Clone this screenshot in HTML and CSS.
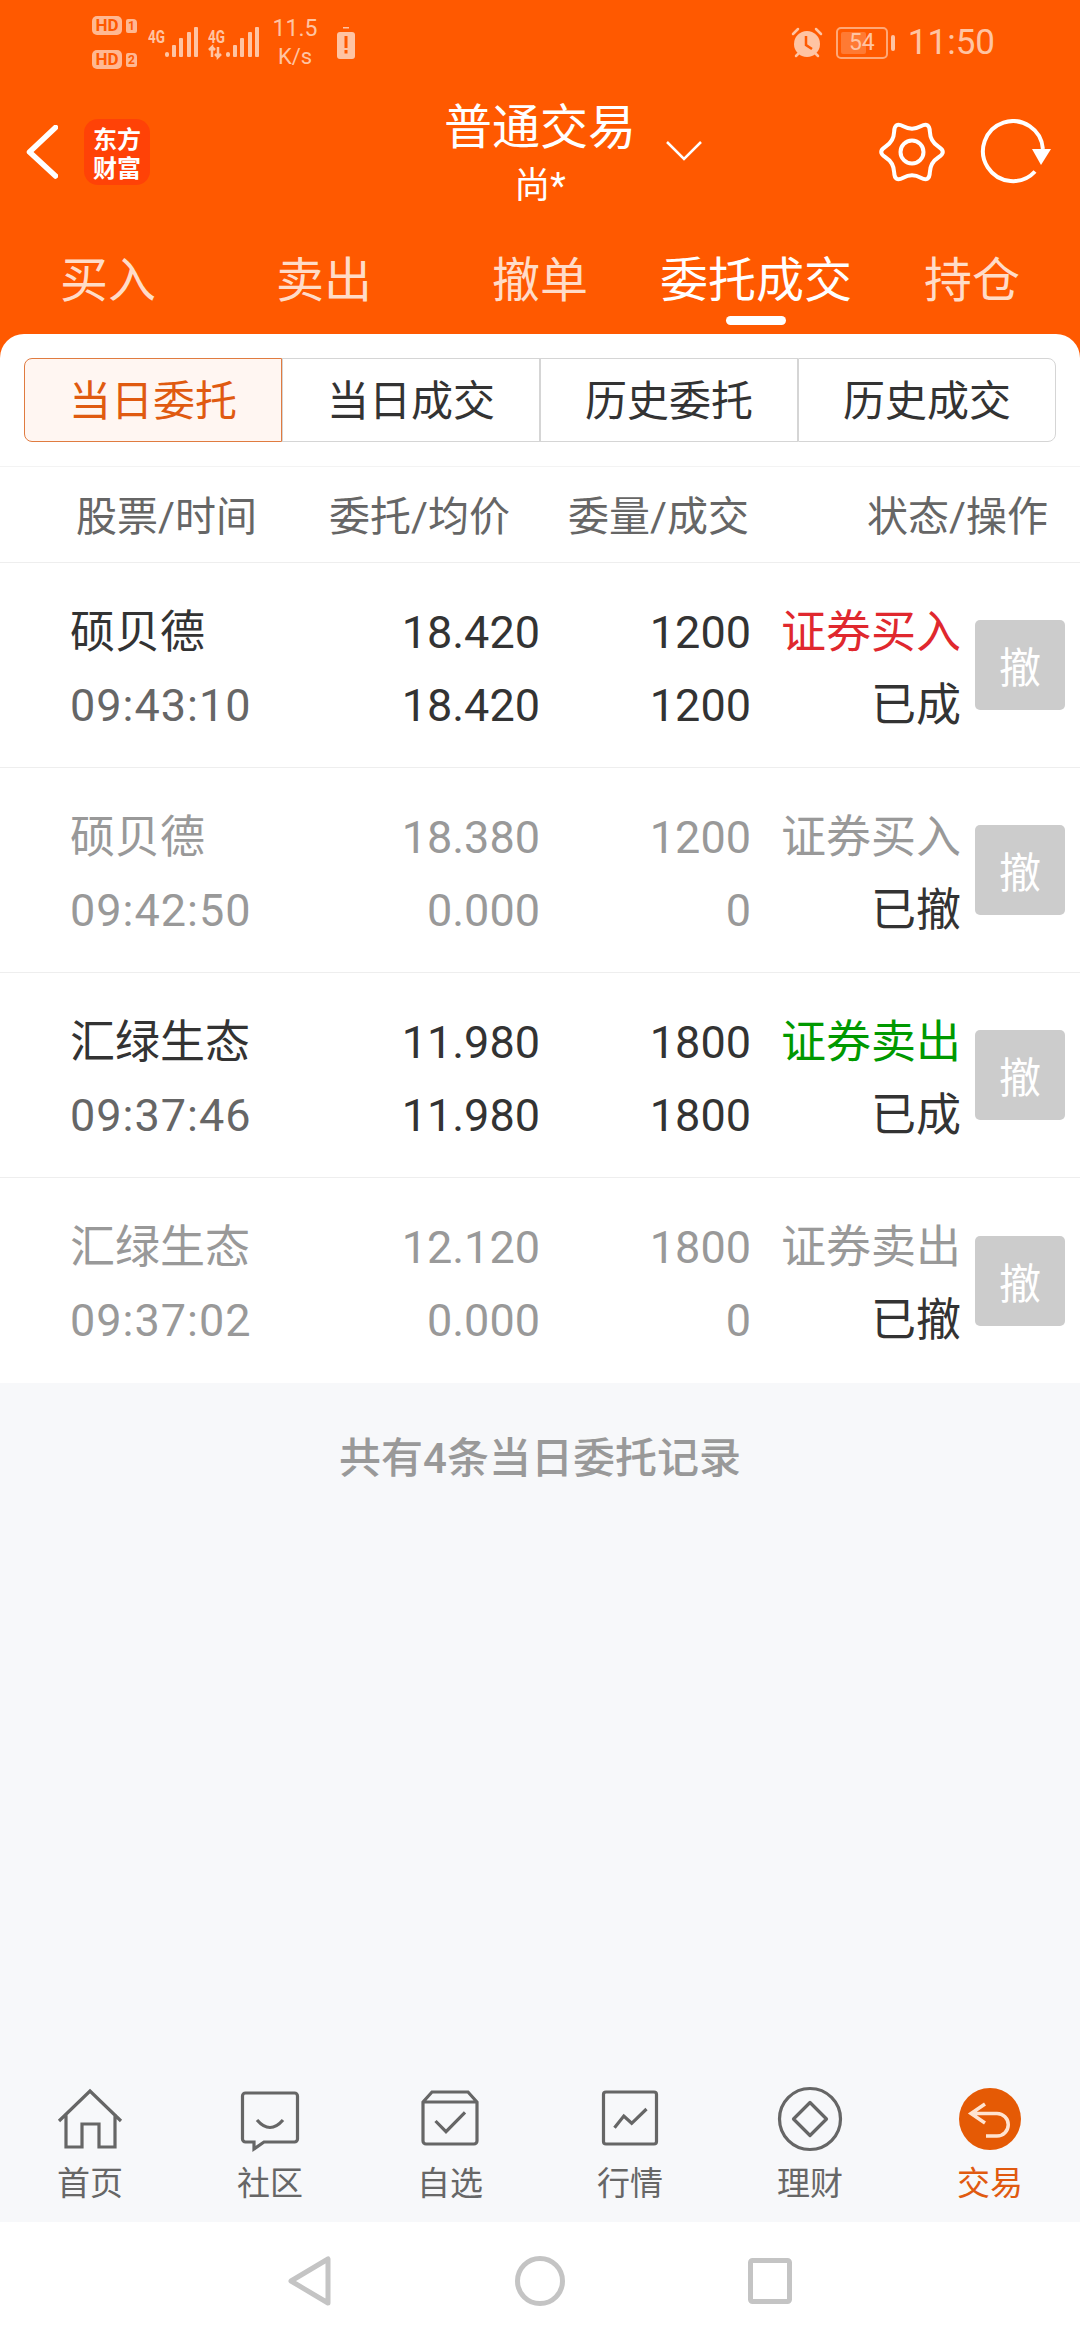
FILE: index.html
```html
<!DOCTYPE html>
<html lang="zh-CN">
<head>
    <meta charset="UTF-8">
    <meta name="viewport" content="width=device-width, initial-scale=1.0">
    <title>委托成交</title>
    <link rel="stylesheet" href="styles.css">
</head>
<body>
<div class="page">

    <!-- Orange top area -->
    <header class="top">
        <div class="status-bar">
            <div class="sims">
                <div class="sim"><span class="hd">HD</span><span class="sim-no">1</span></div>
                <div class="sim"><span class="hd">HD</span><span class="sim-no">2</span></div>
            </div>
            <svg class="net" width="50" height="34" viewBox="0 0 50 34">
                <text x="0" y="17" class="net-text" textLength="17" lengthAdjust="spacingAndGlyphs">4G</text>
                <rect x="17" y="26" width="4" height="5" rx="2"/>
                <rect x="24" y="19" width="4" height="12" rx="1"/>
                <rect x="31" y="12" width="4" height="19" rx="1"/>
                <rect x="39" y="6" width="4" height="25" rx="1"/>
                <rect x="46" y="1" width="4" height="30" rx="1"/>
            </svg>
            <svg class="net net-two" width="51" height="34" viewBox="0 0 51 34">
                <text x="0" y="17" class="net-text" textLength="17" lengthAdjust="spacingAndGlyphs">4G</text>
                <path d="M4 31V21L1 24M4 21L7 24M10 21V31L13 28M10 31L7 28" class="net-arrows"/>
                <rect x="18" y="26" width="4" height="5" rx="2"/>
                <rect x="25" y="19" width="4" height="12" rx="1"/>
                <rect x="32" y="12" width="4" height="19" rx="1"/>
                <rect x="40" y="6" width="4" height="25" rx="1"/>
                <rect x="47" y="1" width="4" height="30" rx="1"/>
            </svg>
            <div class="speed"><span>11.5</span><span class="speed-unit">K/s</span></div>
            <svg class="warn-battery" width="18" height="32" viewBox="0 0 18 32">
                <rect x="6" y="0" width="6" height="1.5"/>
                <rect x="0" y="5" width="18" height="27" rx="3"/>
                <rect x="7.5" y="9" width="3" height="12" fill="#ff5900"/>
                <rect x="7.5" y="23" width="3" height="3.5" fill="#ff5900"/>
            </svg>
            <div class="status-right">
                <svg width="32" height="32" viewBox="0 0 32 32">
                    <circle cx="16" cy="17" r="13" fill="#ffc4a3"/>
                    <path d="M15 9V18L21 22" fill="none" stroke="#ff5900" stroke-width="2.5"/>
                    <path d="M2 7L7 2M30 7L25 2M5 29L7 27M27 29L25 27" fill="none" stroke="#ffc4a3" stroke-width="2.5" stroke-linecap="round"/>
                </svg>
                <div class="battery">
                    <div class="battery-box"><span class="battery-fill"></span><span class="battery-level">54</span></div>
                    <span class="battery-nub"></span>
                </div>
                <span class="clock">11:50</span>
            </div>
        </div>

        <div class="head-row">
            <div class="head-left">
                <svg width="32" height="54" viewBox="0 0 32 54">
                    <path d="M29.5 2.5L3.5 27L29.5 51" fill="none" stroke="#fff" stroke-width="5.5" stroke-linecap="round" stroke-linejoin="round"/>
                </svg>
                <div class="logo">东方<br>财富</div>
            </div>
            <div class="head-title">
                <div class="title">普通交易</div>
                <div class="subtitle">尚*</div>
                <svg class="title-arrow" width="36" height="20" viewBox="0 0 36 20">
                    <path d="M1 1L18 18L35 1" fill="none" stroke="#fff" stroke-width="2.5"/>
                </svg>
            </div>
            <div class="head-right">
                <svg width="66" height="66" viewBox="0 0 66 66">
                    <path d="M24.25 7.35Q33 12 41.75 7.35Q50.5 2.7 50.85 12.6Q51.2 22.5 59.6 27.75Q68 33 59.6 38.25Q51.2 43.5 50.85 53.4Q50.5 63.3 41.75 58.65Q33 54 24.25 58.65Q15.5 63.3 15.15 53.4Q14.8 43.5 6.4 38.25Q-2 33 6.4 27.75Q14.8 22.5 15.15 12.6Q15.5 2.7 24.25 7.35Z" fill="none" stroke="#fff" stroke-width="4"/>
                    <circle cx="33" cy="33" r="11.5" fill="none" stroke="#fff" stroke-width="4"/>
                </svg>
                <svg width="76" height="66" viewBox="0 0 76 66">
                    <path d="M59 52.5A30 30 0 1 1 66.9 30" fill="none" stroke="#fff" stroke-width="4"/>
                    <path d="M56 30H75L65 46Z" fill="#fff"/>
                </svg>
            </div>
        </div>

        <nav class="trade-tabs">
            <div class="trade-tab">买入</div>
            <div class="trade-tab">卖出</div>
            <div class="trade-tab">撤单</div>
            <div class="trade-tab active">委托成交</div>
            <div class="trade-tab">持仓</div>
        </nav>
    </header>

    <!-- Orders card -->
    <section class="card">
        <div class="segments">
            <div class="segment active">当日委托</div>
            <div class="segment">当日成交</div>
            <div class="segment">历史委托</div>
            <div class="segment">历史成交</div>
        </div>

        <div class="table-head">
            <div>股票/时间</div>
            <div>委托/均价</div>
            <div>委量/成交</div>
            <div>状态/操作</div>
        </div>

        <div class="order">
            <div class="cell-name"><div>硕贝德</div><div class="time">09:43:10</div></div>
            <div class="cell-num"><div>18.420</div><div>18.420</div></div>
            <div class="cell-num"><div>1200</div><div>1200</div></div>
            <div class="cell-num"><div class="buy">证券买入</div><div>已成</div></div>
            <div class="cancel">撤</div>
        </div>
        <div class="order done">
            <div class="cell-name"><div>硕贝德</div><div class="time">09:42:50</div></div>
            <div class="cell-num"><div>18.380</div><div>0.000</div></div>
            <div class="cell-num"><div>1200</div><div>0</div></div>
            <div class="cell-num"><div>证券买入</div><div class="state">已撤</div></div>
            <div class="cancel">撤</div>
        </div>
        <div class="order">
            <div class="cell-name"><div>汇绿生态</div><div class="time">09:37:46</div></div>
            <div class="cell-num"><div>11.980</div><div>11.980</div></div>
            <div class="cell-num"><div>1800</div><div>1800</div></div>
            <div class="cell-num"><div class="sell">证券卖出</div><div>已成</div></div>
            <div class="cancel">撤</div>
        </div>
        <div class="order done last">
            <div class="cell-name"><div>汇绿生态</div><div class="time">09:37:02</div></div>
            <div class="cell-num"><div>12.120</div><div>0.000</div></div>
            <div class="cell-num"><div>1800</div><div>0</div></div>
            <div class="cell-num"><div>证券卖出</div><div class="state">已撤</div></div>
            <div class="cancel">撤</div>
        </div>
    </section>

    <div class="records">共有4条当日委托记录</div>

    <!-- Bottom navigation -->
    <nav class="bottom-nav">
        <div class="nav-item">
            <svg class="nav-icon" viewBox="0 0 64 64">
                <path d="M1 34L32 4L63 34M8 27V60H24V37H41V60H57V27"/>
            </svg>
            <span>首页</span>
        </div>
        <div class="nav-item">
            <svg class="nav-icon" viewBox="0 0 64 64">
                <path d="M7.5 6H56.5A3 3 0 0 1 59.5 9V52A3 3 0 0 1 56.5 55H26L16 62V55H7.5A3 3 0 0 1 4.5 52V9A3 3 0 0 1 7.5 6Z"/>
                <path d="M19 33Q32 48 45 33"/>
            </svg>
            <span>社区</span>
        </div>
        <div class="nav-item">
            <svg class="nav-icon" viewBox="0 0 64 64">
                <path d="M5 15L14 5H50L59 15V54A3 3 0 0 1 56 57H8A3 3 0 0 1 5 54ZM5 15H59"/>
                <path d="M17.5 34L28 44.7L47 25.3"/>
            </svg>
            <span>自选</span>
        </div>
        <div class="nav-item">
            <svg class="nav-icon" viewBox="0 0 64 64">
                <rect x="5.5" y="5" width="53" height="52" rx="2.5"/>
                <path d="M16.5 40.7L25.8 29L33.7 36.3L48.5 22"/>
            </svg>
            <span>行情</span>
        </div>
        <div class="nav-item">
            <svg class="nav-icon" viewBox="0 0 64 64">
                <circle cx="32" cy="32" r="30.5"/>
                <path d="M32 15.5L48.5 32L32 48.5L15.5 32Z" stroke-linejoin="round"/>
            </svg>
            <span>理财</span>
        </div>
        <div class="nav-item active">
            <svg class="nav-icon" viewBox="0 0 64 64">
                <circle cx="32" cy="32" r="31" class="trade-disc"/>
                <path d="M27 17L13 26.5L27 36M13 26.5H39A11 11 0 0 1 39 49H28" class="trade-arrow"/>
            </svg>
            <span>交易</span>
        </div>
    </nav>

    <!-- System buttons -->
    <div class="system-nav">
        <svg width="44" height="50" viewBox="0 0 44 50">
            <path d="M40 3V47L3 25Z" fill="none" stroke="#c4c4c4" stroke-width="5" stroke-linejoin="round"/>
        </svg>
        <svg width="50" height="50" viewBox="0 0 50 50">
            <circle cx="25" cy="25" r="22.5" fill="none" stroke="#c4c4c4" stroke-width="5"/>
        </svg>
        <svg width="44" height="46" viewBox="0 0 44 46">
            <rect x="2.5" y="2.5" width="39" height="41" rx="2" fill="none" stroke="#c4c4c4" stroke-width="5"/>
        </svg>
    </div>
</div>
</body>
</html>
```

FILE: styles.css
```css
/* General Styles */
body {
    margin: 0;
    font-family: Roboto, "Noto Sans CJK SC", sans-serif;
    color: #333;
}

.page {
    width: 1080px;
    height: 2340px;
    display: flex;
    flex-direction: column;
    background-color: #f7f8fa;
    overflow: hidden;
}

/* Top area */
.top {
    background-color: #ff5900;
    height: 358px;
    flex-shrink: 0;
}

.status-bar {
    height: 85px;
    display: flex;
    align-items: center;
    padding: 0 85px 0 92px;
    color: #ffc4a3;
}

.sims {
    width: 45px;
    display: flex;
    flex-direction: column;
    gap: 15px;
}

.sim {
    display: flex;
    align-items: center;
    gap: 4px;
}

.hd {
    width: 30px;
    height: 19px;
    line-height: 19px;
    border-radius: 5px;
    background-color: #ffb892;
    color: #ff5900;
    font-size: 17px;
    font-weight: 700;
    text-align: center;
}

.sim-no {
    width: 11px;
    height: 14px;
    line-height: 14px;
    border-radius: 2px 4px 2px 2px;
    background-color: #ffb892;
    color: #ff5900;
    font-size: 12px;
    font-weight: 700;
    text-align: center;
}

.net {
    margin-left: 11px;
    fill: #ffc4a3;
}

.net-two {
    margin-left: 10px;
}

.net-text {
    font-size: 18px;
    font-weight: 700;
}

.net-arrows {
    fill: none;
    stroke: #ffc4a3;
    stroke-width: 2.5;
}

.speed {
    width: 44px;
    margin-left: 14px;
    display: flex;
    flex-direction: column;
    align-items: center;
    font-size: 23px;
    line-height: 28px;
}

.speed-unit {
    font-size: 22px;
}

.warn-battery {
    margin-left: 20px;
    fill: #ffc4a3;
}

.status-right {
    margin-left: auto;
    display: flex;
    align-items: center;
}

.battery {
    margin-left: 13px;
    display: flex;
    align-items: center;
    gap: 3px;
}

.battery-box {
    position: relative;
    width: 52px;
    height: 32px;
    box-sizing: border-box;
    border: 2px solid #ffa877;
    border-radius: 5px;
    text-align: center;
}

.battery-fill {
    position: absolute;
    left: 3px;
    top: 3px;
    bottom: 3px;
    width: 25px;
    border-radius: 2px;
    background-color: #ff7a33;
}

.battery-level {
    position: relative;
    font-size: 23px;
    line-height: 28px;
    color: #ffc4a3;
}

.battery-nub {
    width: 4px;
    height: 16px;
    border-radius: 2px;
    background-color: #ffc4a3;
}

.clock {
    margin-left: 13px;
    font-size: 35px;
}

/* Title row */
.head-row {
    height: 134px;
    display: grid;
    grid-template-columns: 1fr auto 1fr;
    align-items: center;
}

.head-left {
    display: flex;
    align-items: center;
    gap: 26px;
    padding-left: 26px;
}

.logo {
    width: 66px;
    height: 66px;
    border-radius: 14px;
    background-color: #ff4207;
    color: #fff;
    font-family: "Noto Sans CJK SC", sans-serif;
    font-size: 24px;
    font-weight: 700;
    line-height: 29px;
    padding-top: 4px;
    box-sizing: border-box;
    text-align: center;
}

.head-title {
    position: relative;
    margin-top: 10px;
    color: #fff;
    text-align: center;
}

.title {
    font-size: 48px;
    line-height: 58px;
}

.subtitle {
    font-size: 36px;
    line-height: 58px;
}

.title-arrow {
    position: absolute;
    left: calc(100% + 30px);
    top: 42px;
}

.head-right {
    display: flex;
    align-items: center;
    justify-content: flex-end;
    gap: 31px;
    padding-right: 28px;
}

/* Buy / sell tabs */
.trade-tabs {
    display: grid;
    grid-template-columns: repeat(5, 216px);
}

.trade-tab {
    padding-top: 32px;
    height: 83px;
    font-size: 48px;
    line-height: 60px;
    text-align: center;
    color: #ffdcc8;
    position: relative;
}

.trade-tab.active {
    color: #fff;
}

.trade-tab.active::after {
    content: "";
    position: absolute;
    left: 78px;
    bottom: 9px;
    width: 60px;
    height: 9px;
    border-radius: 5px;
    background-color: #fff;
}

/* Orders card */
.card {
    margin-top: -24px;
    background-color: #fff;
    border-radius: 24px 24px 0 0;
    padding-top: 24px;
}

.segments {
    display: flex;
    margin: 0 24px;
}

.segment {
    flex: 1;
    height: 84px;
    line-height: 86px;
    box-sizing: border-box;
    border: 1px solid #d5d5d5;
    font-size: 42px;
    text-align: center;
    color: #333;
}

.segment:first-child {
    border-radius: 8px 0 0 8px;
}

.segment:last-child {
    border-radius: 0 8px 8px 0;
}

.segment.active {
    background-color: #fff6f2;
    border-color: #e07b40;
    color: #e05a10;
}

.table-head {
    margin-top: 24px;
    height: 97px;
    box-sizing: border-box;
    border-top: 1px solid #f3f3f3;
    border-bottom: 1px solid #eee;
    padding-bottom: 4px;
    display: grid;
    grid-template-columns: 300px 210px 239px 299px;
    align-items: center;
    color: #666;
    font-size: 41px;
    text-align: right;
    white-space: nowrap;
}

.table-head div:first-child {
    padding-left: 76px;
    text-align: left;
}

.order {
    height: 205px;
    box-sizing: border-box;
    border-bottom: 1px solid #eee;
    display: grid;
    grid-template-columns: 340px 200px 211px 210px 90px;
    align-items: center;
    font-size: 45px;
    line-height: 73px;
}

.order.last {
    border-bottom: 0;
}

.cell-name {
    padding: 7px 0 0 70px;
}

.cell-num {
    padding-top: 7px;
    text-align: right;
}

.time {
    color: #666;
    letter-spacing: 1px;
}

.buy {
    color: #e0282e;
}

.sell {
    color: #009900;
}

.order.done {
    color: #999;
}

.order.done .time {
    color: #999;
}

.order.done .state {
    color: #333;
}

.cancel {
    grid-column: 5;
    width: 90px;
    height: 90px;
    margin-left: 14px;
    border-radius: 5px;
    background-color: #ccc;
    color: #fff;
    font-size: 42px;
    line-height: 98px;
    text-align: center;
}

.records {
    padding-top: 46px;
    line-height: 60px;
    font-size: 42px;
    font-weight: 500;
    color: #999;
    text-align: center;
}

/* Bottom navigation */
.bottom-nav {
    margin-top: auto;
    height: 162px;
    flex-shrink: 0;
    box-sizing: border-box;
    padding-top: 27px;
    display: grid;
    grid-template-columns: repeat(6, 180px);
}

.nav-item {
    display: flex;
    flex-direction: column;
    align-items: center;
    font-size: 33px;
    line-height: 44px;
    color: #666;
}

.nav-item span {
    margin-top: 11px;
}

.nav-icon {
    width: 64px;
    height: 64px;
    overflow: visible;
}

.nav-icon path,
.nav-icon rect,
.nav-icon circle {
    fill: none;
    stroke: #666;
    stroke-width: 3.2;
}

.nav-item.active {
    color: #e05a10;
}

.nav-icon .trade-disc {
    fill: #e55a05;
    stroke: none;
}

.nav-icon .trade-arrow {
    stroke: #ffe3d0;
    stroke-width: 3.5;
}

/* System buttons */
.system-nav {
    height: 118px;
    flex-shrink: 0;
    display: flex;
    align-items: center;
    justify-content: center;
    gap: 183px;
    background-color: #fff;
}
```
